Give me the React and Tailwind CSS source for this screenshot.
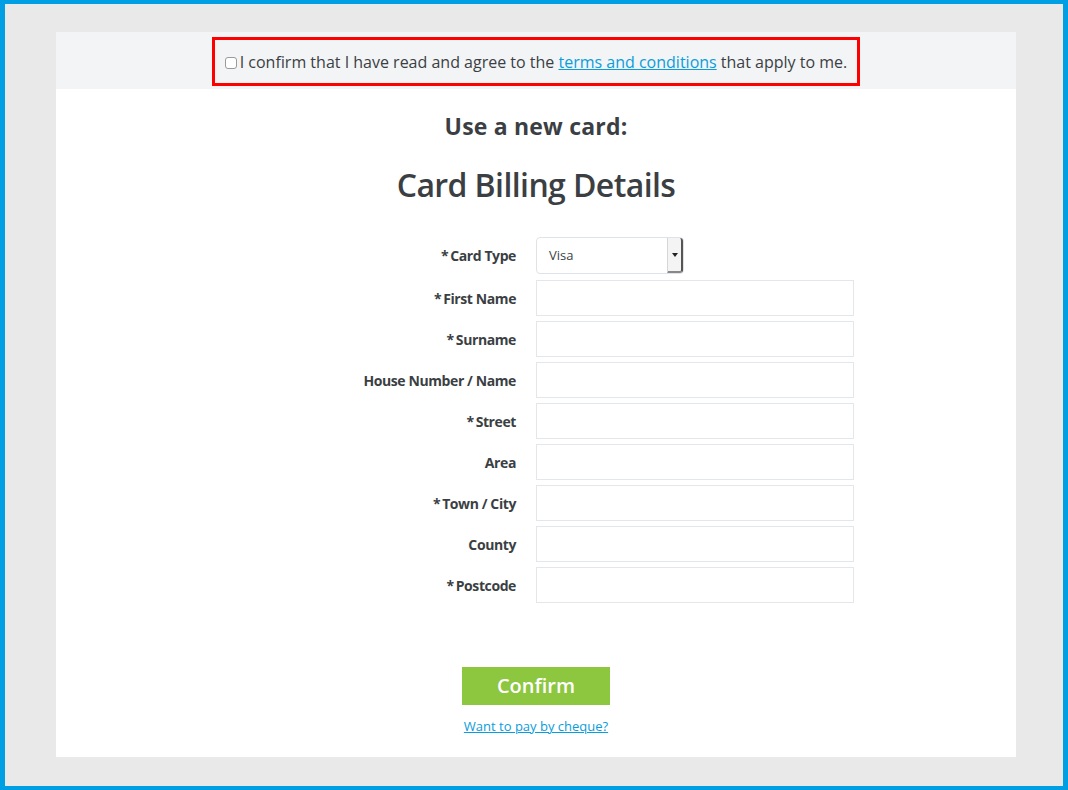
import React from 'react';

const fields = [
  { label: 'First Name', required: true },
  { label: 'Surname', required: true },
  { label: 'House Number / Name', required: false },
  { label: 'Street', required: true },
  { label: 'Area', required: false },
  { label: 'Town / City', required: true },
  { label: 'County', required: false },
  { label: 'Postcode', required: true },
];

const Label = ({ text, required }) => (
  <div className="w-[160px] text-right text-[14px] font-bold tracking-[-0.4px] text-[#3b3f44]">
    {required && <span className="mr-[2px]">*</span>}
    {text}
  </div>
);

export default function App() {
  return (
    <div
      className="h-[790px] w-[1068px] border-x-[5px] border-t-[4px] border-b-[4px] border-[#009fe3] bg-[#e9e9e9] pl-[51px] pt-[28px] text-[#3b3f44]"
      style={{ fontFamily: '"Open Sans", "Noto Sans", sans-serif' }}
    >
      <div className="flex h-[725px] w-[960px] flex-col bg-white">
        {/* terms strip */}
        <div className="flex h-[57px] justify-center bg-[#f3f4f5] pt-[5px]">
          <div className="flex h-[49px] w-[648px] items-center justify-center border-[3px] border-[#ff0000] text-[16px]">
            <span className="mr-[3px] mt-[2px] inline-block h-[12px] w-[12px] rounded-[3px] border border-[#9a9a9a] bg-white" />
            <span>
              I confirm that I have read and agree to the{' '}
              <a href="#" className="text-[#0a9ddb] underline">terms and conditions</a>{' '}
              that apply to me.
            </span>
          </div>
        </div>

        <h2 className="mt-[22px] text-center text-[23px] font-bold leading-[30px] tracking-[0.2px]">Use a new card:</h2>
        <h1 className="mt-[24px] text-center text-[32px] font-semibold leading-[40px] tracking-[-0.6px]">Card Billing Details</h1>

        {/* form */}
        <div className="mt-[32px] flex flex-col gap-[5px] pl-[300px]">
          <div className="flex items-center gap-[20px] pb-[1px]">
            <Label text="Card Type" required />
            <div className="flex h-[37px] w-[148px] items-center justify-between rounded-[4px] border border-[#dfe3e8] pl-[12px]">
              <span className="text-[13px]">Visa</span>
              <span className="flex h-[35px] w-[16px] items-center justify-center rounded-r-[3px] border-b-2 border-l border-r-2 border-b-[#888] border-l-[#d6d6d6] border-r-[#555] bg-[#f4f4f4]">
                <span className="h-0 w-0 border-x-[3px] border-t-[4px] border-x-transparent border-t-[#222]" />
              </span>
            </div>
          </div>
          {fields.map((f) => (
            <div key={f.label} className="flex items-center gap-[20px]">
              <Label text={f.label} required={f.required} />
              <div className="h-[36px] w-[318px] border border-[#e3e6ea] bg-white" />
            </div>
          ))}
        </div>

        <div className="mt-[64px] flex flex-col items-center">
          <button className="h-[38px] w-[148px] bg-[#8dc63f] text-[20px] font-semibold text-white">Confirm</button>
          <a href="#" className="mt-[12px] text-[13px] text-[#0a9ddb] underline">Want to pay by cheque?</a>
        </div>
      </div>
    </div>
  );
}
